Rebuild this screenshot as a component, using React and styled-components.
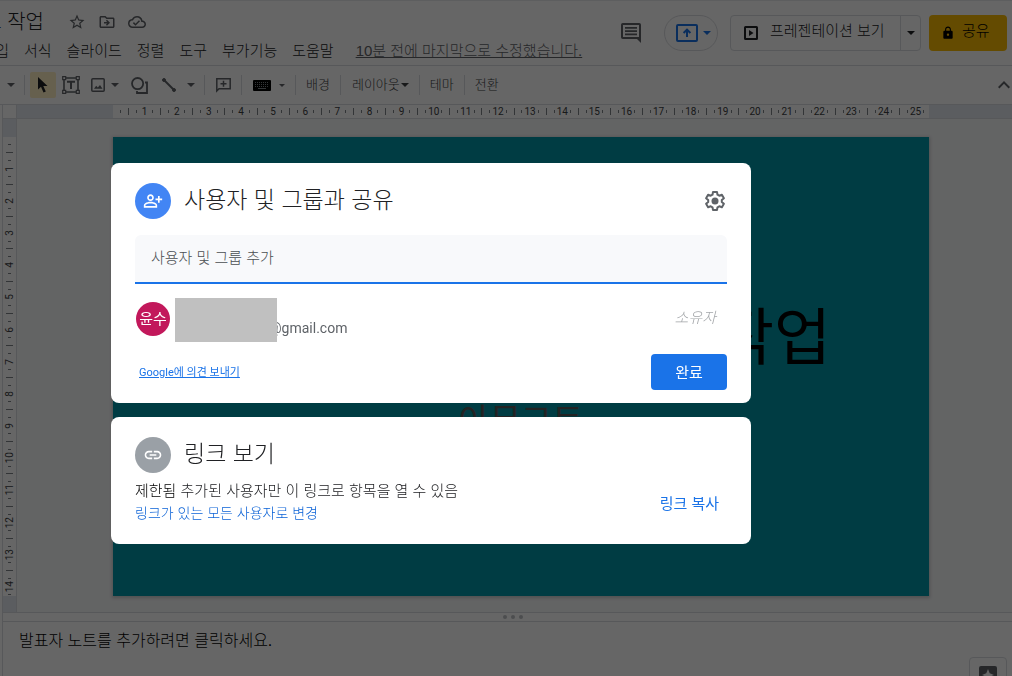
import React from "react";
import styled, { createGlobalStyle, css } from "styled-components";
import {
  MdStarOutline,
  MdOutlineDriveFileMove,
  MdOutlineCloudDone,
  MdLock,
  MdLink,
  MdExpandLess,
  MdOutlinePersonAddAlt,
} from "react-icons/md";

const GlobalStyle = createGlobalStyle`
  * {
    box-sizing: border-box;
  }

  body {
    margin: 0;
    background: #fff;
    color: #202124;
    font-family: "Liberation Sans", "Noto Sans CJK KR", sans-serif;
    overflow: hidden;
  }

  button,
  input {
    font-family: inherit;
  }

  svg {
    flex: none;
  }

  h1,
  h2,
  p {
    margin: 0;
    font-weight: 300;
  }
`;

const Page = styled.div`
  display: flex;
  flex-direction: column;
  height: 100vh;
  border-top: 1px solid #e8eaed;
`;

const Header = styled.header`
  display: flex;
  justify-content: space-between;
  height: 65px;
  flex: none;
  padding-right: 5px;
  border-bottom: 1px solid #dadce0;
`;

const Heading = styled.div`
  display: flex;
  flex-direction: column;
  padding-top: 5px;
`;

const TitleRow = styled.div`
  display: flex;
  align-items: center;
  height: 32px;
`;

const DocTitle = styled.h1`
  display: flex;
  justify-content: flex-end;
  width: 44px;
  margin-right: 24px;
  overflow: hidden;
  white-space: nowrap;
  font-size: 20px;
  line-height: 32px;
`;

const IconButton = styled.button`
  display: flex;
  align-items: center;
  justify-content: center;
  flex: none;
  width: ${(p) => p.$width || 18}px;
  height: ${(p) => p.$height || 18}px;
  margin: 0;
  padding: 0;
  border: 0;
  border-radius: 2px;
  background: ${(p) => (p.$active ? "#feefc3" : "none")};
  color: ${(p) => p.$color || "#5f6368"};
`;

const TitleIcons = styled.div`
  display: flex;
  gap: 12px;
`;

const Menu = styled.nav`
  display: flex;
  align-items: center;
  gap: 15px;
  height: 24px;
  margin-top: 1px;
`;

const MenuItem = styled.button`
  display: flex;
  justify-content: flex-end;
  width: ${(p) => (p.$clipped ? "9px" : "auto")};
  padding: 0;
  overflow: hidden;
  border: 0;
  background: none;
  color: #202124;
  font-size: 15px;
  font-weight: 300;
  line-height: 24px;
  white-space: nowrap;
`;

const LastEdit = styled.a`
  margin-left: 7px;
  color: #5f6368;
  font-size: 15px;
  font-weight: 300;
  line-height: 24px;
  white-space: nowrap;
`;

const Actions = styled.div`
  display: flex;
  align-items: center;
`;

const Present = styled.button`
  display: flex;
  align-items: center;
  gap: 5px;
  width: 54px;
  height: 36px;
  margin: 0 12px 0 20px;
  padding: 0 0 0 11px;
  border: 1px solid #dadce0;
  border-radius: 18px;
  background: none;
  color: #1a73e8;
`;

const SplitButton = styled.div`
  display: flex;
  height: 36px;
  margin-right: 8px;
  border: 1px solid #dadce0;
  border-radius: 4px;
`;

const SlideshowButton = styled.button`
  display: flex;
  align-items: center;
  gap: 12px;
  width: 170px;
  padding: 0 0 0 13px;
  border: 0;
  border-right: 1px solid #dadce0;
  background: none;
  color: #202124;
  font-size: 15px;
  font-weight: 300;
  white-space: nowrap;
`;

const ButtonLabel = styled.span`
  padding-bottom: 4px;
  line-height: 20px;
`;

const ShareButton = styled.button`
  display: flex;
  align-items: center;
  gap: 7px;
  width: 78px;
  height: 36px;
  padding: 0 0 0 12px;
  border: 0;
  border-radius: 4px;
  background: #fbbc04;
  color: #000;
  font-size: 15px;
  font-weight: 300;
`;

const Toolbar = styled.div`
  display: flex;
  align-items: center;
  flex: none;
  height: 39px;
  border-bottom: 1px solid #dadce0;
`;

const Divider = styled.span`
  flex: none;
  width: 1px;
  height: 20px;
  margin: 0 ${(p) => p.$right || 11}px 0 ${(p) => p.$left || 11}px;
  background: #dadce0;
`;

const ToolText = styled.button`
  display: flex;
  align-items: center;
  gap: 1px;
  padding: 0;
  border: 0;
  background: none;
  color: #3c4043;
  font-size: 13px;
  font-weight: 300;
  line-height: 20px;
  white-space: nowrap;
`;

const Push = styled.span`
  flex: 1;
`;

const Workspace = styled.main`
  display: grid;
  grid-template-columns: 3px 14px 96px 1fr 83px;
  grid-template-rows: 14px 18px auto 16px;
  flex: none;
  background: #f8f9fa;
`;

const Strip = styled.div`
  grid-row: 1 / -1;
  border-right: 1px solid #dadce0;
  background: #fff;
`;

const RulerSpace = styled.div`
  background: ${(p) => (p.$corner ? "#fff" : "#e4e9ef")};
  border-right: ${(p) => (p.$side ? "1px solid #dadce0" : "0")};
  border-bottom: ${(p) => (p.$side && !p.$corner ? "0" : "1px solid #dadce0")};
  grid-column: ${(p) => p.$column};
  grid-row: ${(p) => p.$row};
`;

const Ruler = styled.div`
  display: flex;
  flex-direction: ${(p) => (p.$vertical ? "column" : "row")};
  grid-column: ${(p) => (p.$vertical ? 2 : 4)};
  grid-row: ${(p) => (p.$vertical ? 3 : 1)};
  min-width: 0;
  min-height: 0;
  overflow: hidden;
  border: 0 solid #dadce0;
  border-width: ${(p) => (p.$vertical ? "0 1px 0 0" : "0 0 1px 0")};
  background: #fff;
  color: #3c4043;
  font-family: Roboto, sans-serif;
  font-size: 10px;
  line-height: 12px;
`;

const unit = (p) => (p.$vertical ? "100% / 14.28" : "100% / 25.4");

const RulerStart = styled.span`
  display: flex;
  flex-direction: ${(p) => (p.$vertical ? "column" : "row")};
  align-items: center;
  justify-content: center;
  flex: 0 0 calc(${unit} / 2 - 1px);
`;

const RulerCell = styled.span`
  display: flex;
  flex-direction: ${(p) => (p.$vertical ? "column" : "row")};
  align-items: center;
  flex: 0 0 calc(${unit});
  min-height: 0;
`;

const Tick = styled.i`
  flex: none;
  background: #80868b;
  ${(p) =>
    p.$vertical
      ? css`
          width: ${p.$long ? 7 : 3}px;
          height: 1px;
        `
      : css`
          width: 1px;
          height: ${p.$long ? 7 : 3}px;
        `}
`;

const RulerLabel = styled.span`
  display: flex;
  align-items: center;
  justify-content: space-between;
  flex-direction: ${(p) => (p.$vertical ? "column" : "row")};
  flex: 0 0 54%;
  margin: auto;
`;

const RulerNumber = styled.span`
  ${(p) =>
    p.$vertical &&
    css`
      writing-mode: vertical-rl;
      transform: rotate(180deg);
    `}
`;

const Slide = styled.section`
  display: flex;
  flex-direction: column;
  grid-column: 4;
  grid-row: 3;
  aspect-ratio: 16 / 9;
  padding: 154px 98px 0;
  background: #0097a7;
  box-shadow: 0 1px 3px 1px rgba(60, 64, 67, 0.25);
`;

const SlideTitle = styled.h2`
  color: #000;
  font-size: 62px;
  font-weight: 400;
  line-height: 96px;
  text-align: right;
`;

const SlideSubtitle = styled.p`
  color: #595959;
  font-size: 34px;
  font-weight: 400;
  line-height: 52px;
  margin-top: 8px;
  text-align: center;
`;

const Splitter = styled.div`
  display: flex;
  align-items: center;
  justify-content: center;
  gap: 4px;
  flex: none;
  height: 10px;
  margin-left: 2px;
  padding-left: 10px;
  border: 1px solid #dadce0;
  border-right: 0;
`;

const Dot = styled.i`
  width: 4px;
  height: 4px;
  border-radius: 50%;
  background: #bdc1c6;
`;

const Notes = styled.section`
  display: flex;
  justify-content: space-between;
  flex: 1;
  min-height: 0;
  margin-left: 2px;
  padding: 7px 5px 0 16px;
  border-left: 1px solid #dadce0;
  color: #000;
  font-size: 16px;
  line-height: 24px;
`;

const Explore = styled.button`
  display: flex;
  align-items: flex-start;
  justify-content: center;
  flex: none;
  width: 38px;
  height: 38px;
  margin-top: 28px;
  padding: 8px 0 0;
  border: 1px solid #dadce0;
  border-radius: 4px;
  background: #fff;
`;

const Backdrop = styled.div`
  position: fixed;
  inset: 0;
  display: flex;
  flex-direction: column;
  align-items: center;
  gap: 14px;
  padding: 163px 150px 0 0;
  background: rgba(0, 0, 0, 0.6);
`;

const Card = styled.section`
  width: 640px;
  max-width: 100%;
  padding: 20px 24px ${(p) => p.$bottom}px;
  border-radius: 8px;
  background: #fff;
`;

const CardHeader = styled.header`
  display: flex;
  align-items: center;
  gap: 13px;
  height: 36px;
`;

const Badge = styled.span`
  display: flex;
  align-items: center;
  justify-content: center;
  width: 36px;
  height: 36px;
  border-radius: 50%;
  background: ${(p) => p.$color};
  color: #fff;
`;

const CardTitle = styled.h2`
  flex: 1;
  padding-bottom: 2px;
  font-size: 23px;
  line-height: 32px;
`;

const PeopleInput = styled.input`
  display: block;
  width: 100%;
  height: 49px;
  margin-top: 16px;
  padding: 0 16px 2px;
  border: 0;
  border-bottom: 2px solid #1a73e8;
  border-radius: 6px 6px 0 0;
  outline: 0;
  background: #f8f9fb;
  font-size: 15px;
  font-weight: 300;

  &::placeholder {
    color: #4a4e52;
    opacity: 1;
  }
`;

const Person = styled.div`
  display: flex;
  align-items: center;
  height: 44px;
  margin-top: 14px;
  padding: 0 11px 0 1px;
`;

const Avatar = styled.span`
  width: 34px;
  height: 34px;
  margin: 0 5px 2px 0;
  border-radius: 50%;
  background: #c2185b;
  color: #fff;
  font-size: 15px;
  line-height: 34px;
  text-align: center;
`;

const Redacted = styled.span`
  width: 102px;
  height: 44px;
  z-index: 1;
  background: #c0c0c0;
`;

const Email = styled.span`
  flex: 1;
  margin: 16px 0 0 -8px;
  color: #5f6368;
  font-family: Roboto, sans-serif;
  font-size: 14px;
  line-height: 20px;
`;

const Role = styled.em`
  margin-bottom: 4px;
  color: #a4a7aa;
  font-size: 15px;
  font-weight: 300;
  line-height: 20px;
`;

const CardFooter = styled.footer`
  display: flex;
  align-items: center;
  justify-content: space-between;
  margin-top: 12px;
  padding-left: 4px;
`;

const Feedback = styled.a`
  padding-top: 2px;
  color: #1a73e8;
  font-family: Roboto, "Noto Sans CJK KR", sans-serif;
  font-size: 11px;
  line-height: 16px;
`;

const DoneButton = styled.button`
  width: 76px;
  height: 36px;
  padding: 0 0 2px;
  border: 0;
  border-radius: 4px;
  background: #1a73e8;
  color: #fff;
  font-size: 15px;
`;

const LinkRow = styled.div`
  display: flex;
  align-items: center;
  justify-content: space-between;
  margin-top: 7px;
  padding-right: 8px;
`;

const LinkInfo = styled.p`
  color: #202124;
  font-size: 15px;
  line-height: 22px;
`;

const State = styled.span`
  color: #000;
`;

const ChangeLink = styled.a`
  display: block;
  color: #0b62d6;
  font-size: 14px;
  line-height: 22px;
  text-decoration: none;
`;

const CopyButton = styled.button`
  padding: 4px 0 0;
  border: 0;
  background: none;
  color: #1a73e8;
  font-size: 15px;
  line-height: 22px;
`;

const Caret = ({ small }) => (
  <svg width={small ? 6 : 8} height={small ? 3 : 4} viewBox="0 0 8 4" fill="currentColor">
    <path d="M0 0h8L4 4z" />
  </svg>
);

const TextBoxIcon = () => (
  <svg width="18" height="18" viewBox="0 0 18 18" fill="none" stroke="currentColor">
    <path d="M4 2h10M4 16h10M2 4v10M16 4v10" strokeWidth="1.6" />
    <path d="M.7.7h3v3h-3zM14.3.7h3v3h-3zM.7 14.3h3v3h-3zM14.3 14.3h3v3h-3z" strokeWidth="1.2" />
    <path d="M5 5.8h8M9 5.8V13" strokeWidth="2" />
  </svg>
);

const ImageIcon = () => (
  <svg width="14" height="14" viewBox="0 0 14 14" fill="none" stroke="currentColor">
    <rect x=".8" y=".8" width="12.4" height="12.4" rx="1" strokeWidth="1.5" />
    <path d="M3 10.8l2.2-3 1.6 1.8L9 7l2.5 3.8z" fill="currentColor" stroke="none" />
  </svg>
);

const ShapeIcon = () => (
  <svg width="17" height="17" viewBox="0 0 17 17" fill="none" stroke="currentColor" strokeWidth="1.8">
    <circle cx="6.6" cy="6.6" r="5.6" />
    <path d="M14 5.5h2V16H6v-2" />
  </svg>
);

const LineIcon = () => (
  <svg width="14" height="14" viewBox="0 0 14 14" stroke="currentColor" fill="currentColor">
    <path d="M2 2l10 10" strokeWidth="2" />
    <circle cx="2" cy="2" r="1.5" />
    <circle cx="12" cy="12" r="1.5" />
  </svg>
);

const CursorIcon = () => (
  <svg width="12" height="16" viewBox="0 0 12 16" fill="#202124">
    <path d="M1 0v12.6l3-2.8 2.5 5.6 2.3-1L6.3 9h4.2z" />
  </svg>
);

const AddCommentIcon = () => (
  <svg width="15" height="15" viewBox="0 0 15 15" fill="none" stroke="currentColor" strokeWidth="1.5">
    <path d="M.8 13V.8h13.4v10H3z" />
    <path d="M7.5 2.8v6M4.5 5.8h6" />
  </svg>
);

const KeyboardIcon = () => (
  <svg width="18" height="11" viewBox="0 0 18 11">
    <rect width="18" height="11" rx="1" fill="#000" />
    <path d="M2 2.5h14M2 4.5h14M2 6.5h14" stroke="#80868b" strokeDasharray="1 1" />
    <path d="M5 8.5h8" stroke="#80868b" />
  </svg>
);

const CommentsIcon = () => (
  <svg width="20" height="20" viewBox="0 0 20 20" fill="currentColor">
    <path
      fillRule="evenodd"
      d="M1.8 0h16.4Q20 0 20 1.8V20l-4-4H1.8Q0 16 0 14.2V1.8Q0 0 1.8 0zM2 2v12h16V2z"
    />
    <path d="M4 4h12v1.8H4zM4 7.2h12V9H4zM4 10.4h12v1.8H4z" />
  </svg>
);

const PresentIcon = () => (
  <svg width="22" height="18" viewBox="0 0 22 18" fill="none" stroke="currentColor" strokeWidth="2">
    <rect x="1" y="1" width="20" height="16" rx="1" />
    <path d="M11 13V6M7.6 9L11 5.6 14.4 9" />
  </svg>
);

const PlayIcon = () => (
  <svg width="14" height="14" viewBox="0 0 14 14" fill="none" stroke="currentColor" strokeWidth="2">
    <rect x="1" y="1" width="12" height="12" rx=".5" />
    <path d="M5 4v6l4.5-3z" fill="currentColor" stroke="none" />
  </svg>
);

const GearIcon = () => (
  <svg width="24" height="24" viewBox="0 0 24 24" fill="none" stroke="#5f6368" strokeWidth="2">
    <path
      strokeLinejoin="round"
      d="M10 3h4l.5 2.7 1.8 1 2.6-.9 2 3.4-2.1 1.8v2l2.1 1.8-2 3.4-2.6-.9-1.8 1L14 21h-4l-.5-2.7-1.8-1-2.6.9-2-3.4L5.2 13v-2L3.1 9.2l2-3.4 2.6.9 1.8-1z"
    />
    <circle cx="12" cy="12" r="3.5" fill="#5f6368" stroke="none" />
  </svg>
);

const ExploreIcon = () => (
  <svg width="18" height="18" viewBox="0 0 18 18">
    <rect width="18" height="18" rx="2" fill="#5f6368" />
    <path d="M9 3l1.7 4.3L15 9l-4.3 1.7L9 15l-1.7-4.3L3 9l4.3-1.7z" fill="#fff" />
  </svg>
);

const menus = ["서식", "슬라이드", "정렬", "도구", "부가기능", "도움말"];

const RulerScale = ({ count, vertical }) => (
  <Ruler $vertical={vertical} aria-hidden="true">
    <RulerStart $vertical={vertical}>
      <Tick $vertical={vertical} />
    </RulerStart>
    {Array.from({ length: count }, (_, i) => (
      <RulerCell key={i} $vertical={vertical}>
        <Tick $vertical={vertical} $long />
        <RulerLabel $vertical={vertical}>
          <Tick $vertical={vertical} />
          <RulerNumber $vertical={vertical}>{i + 1}</RulerNumber>
          <Tick $vertical={vertical} />
        </RulerLabel>
      </RulerCell>
    ))}
  </Ruler>
);

const TopBar = () => (
  <Header>
    <Heading>
      <TitleRow>
        <DocTitle>트 작업</DocTitle>
        <TitleIcons>
          <IconButton aria-label="별표">
            <MdStarOutline size={18} />
          </IconButton>
          <IconButton aria-label="이동">
            <MdOutlineDriveFileMove size={18} />
          </IconButton>
          <IconButton aria-label="문서 상태">
            <MdOutlineCloudDone size={18} />
          </IconButton>
        </TitleIcons>
      </TitleRow>
      <Menu>
        <MenuItem $clipped>삽입</MenuItem>
        {menus.map((name) => (
          <MenuItem key={name}>{name}</MenuItem>
        ))}
        <LastEdit href="#history">10분 전에 마지막으로 수정했습니다.</LastEdit>
      </Menu>
    </Heading>
    <Actions>
      <IconButton $width={26} $height={26} aria-label="댓글">
        <CommentsIcon />
      </IconButton>
      <Present aria-label="발표">
        <PresentIcon />
        <Caret />
      </Present>
      <SplitButton>
        <SlideshowButton>
          <PlayIcon />
          <ButtonLabel>프레젠테이션 보기</ButtonLabel>
        </SlideshowButton>
        <IconButton $width={19} $height={34} $color="#202124" aria-label="보기 옵션">
          <Caret />
        </IconButton>
      </SplitButton>
      <ShareButton>
        <MdLock size={14} />
        <ButtonLabel>공유</ButtonLabel>
      </ShareButton>
    </Actions>
  </Header>
);

const Tools = () => (
  <Toolbar>
    <IconButton $width={22} aria-label="확대/축소">
      <Caret />
    </IconButton>
    <Divider $left={2} $right={5} />
    <IconButton $width={26} $height={26} $active aria-label="선택">
      <CursorIcon />
    </IconButton>
    <IconButton $width={30} aria-label="텍스트 상자">
      <TextBoxIcon />
    </IconButton>
    <IconButton $width={24} aria-label="이미지">
      <ImageIcon />
    </IconButton>
    <IconButton $width={10} aria-label="이미지 옵션">
      <Caret />
    </IconButton>
    <IconButton $width={38} aria-label="도형">
      <ShapeIcon />
    </IconButton>
    <IconButton $width={22} aria-label="선">
      <LineIcon />
    </IconButton>
    <IconButton $width={22} aria-label="선 옵션">
      <Caret />
    </IconButton>
    <Divider $left={2} />
    <IconButton $width={15} aria-label="댓글 추가">
      <AddCommentIcon />
    </IconButton>
    <Divider $left={10} />
    <IconButton $width={18} aria-label="입력 도구">
      <KeyboardIcon />
    </IconButton>
    <IconButton $width={22} aria-label="입력 도구 옵션">
      <Caret small />
    </IconButton>
    <Divider $left={2} $right={10} />
    <ToolText>배경</ToolText>
    <Divider $left={10} $right={11} />
    <ToolText>
      레이아웃
      <Caret />
    </ToolText>
    <Divider $left={10} $right={10} />
    <ToolText>테마</ToolText>
    <Divider $left={10} $right={10} />
    <ToolText>전환</ToolText>
    <Push />
    <IconButton $width={16} aria-label="메뉴 숨기기">
      <MdExpandLess size={24} />
    </IconButton>
  </Toolbar>
);

const Editor = () => (
  <Workspace>
    <Strip />
    <RulerSpace $side $corner $column="2" $row="1" />
    <RulerSpace $column="3" $row="1" />
    <RulerScale count={25} />
    <RulerSpace $column="5" $row="1" />
    <RulerSpace $side $column="2" $row="2" />
    <RulerScale count={14} vertical />
    <RulerSpace $side $column="2" $row="4" />
    <Slide>
      <SlideTitle>작업</SlideTitle>
      <SlideSubtitle>아무그트</SlideSubtitle>
    </Slide>
  </Workspace>
);

const ShareDialog = () => (
  <Backdrop role="dialog" aria-label="공유">
    <Card $bottom={13}>
      <CardHeader>
        <Badge $color="#4285f4">
          <MdOutlinePersonAddAlt size={20} />
        </Badge>
        <CardTitle>사용자 및 그룹과 공유</CardTitle>
        <IconButton $width={24} $height={24} aria-label="설정">
          <GearIcon />
        </IconButton>
      </CardHeader>
      <PeopleInput aria-label="사용자 및 그룹 추가" placeholder="사용자 및 그룹 추가" />
      <Person>
        <Avatar>윤수</Avatar>
        <Redacted />
        <Email>@gmail.com</Email>
        <Role>소유자</Role>
      </Person>
      <CardFooter>
        <Feedback href="#feedback">Google에 의견 보내기</Feedback>
        <DoneButton>완료</DoneButton>
      </CardFooter>
    </Card>
    <Card $bottom={20}>
      <CardHeader>
        <Badge $color="#9aa0a6">
          <MdLink size={20} />
        </Badge>
        <CardTitle>링크 보기</CardTitle>
      </CardHeader>
      <LinkRow>
        <LinkInfo>
          <State>제한됨</State> 추가된 사용자만 이 링크로 항목을 열 수 있음
          <ChangeLink href="#change">링크가 있는 모든 사용자로 변경</ChangeLink>
        </LinkInfo>
        <CopyButton>링크 복사</CopyButton>
      </LinkRow>
    </Card>
  </Backdrop>
);

const App = () => {
  return (
    <>
      <GlobalStyle />
      <Page>
        <TopBar />
        <Tools />
        <Editor />
        <Splitter>
          <Dot />
          <Dot />
          <Dot />
        </Splitter>
        <Notes>
          <p>발표자 노트를 추가하려면 클릭하세요.</p>
          <Explore aria-label="탐색">
            <ExploreIcon />
          </Explore>
        </Notes>
      </Page>
      <ShareDialog />
    </>
  );
};

export default App;
